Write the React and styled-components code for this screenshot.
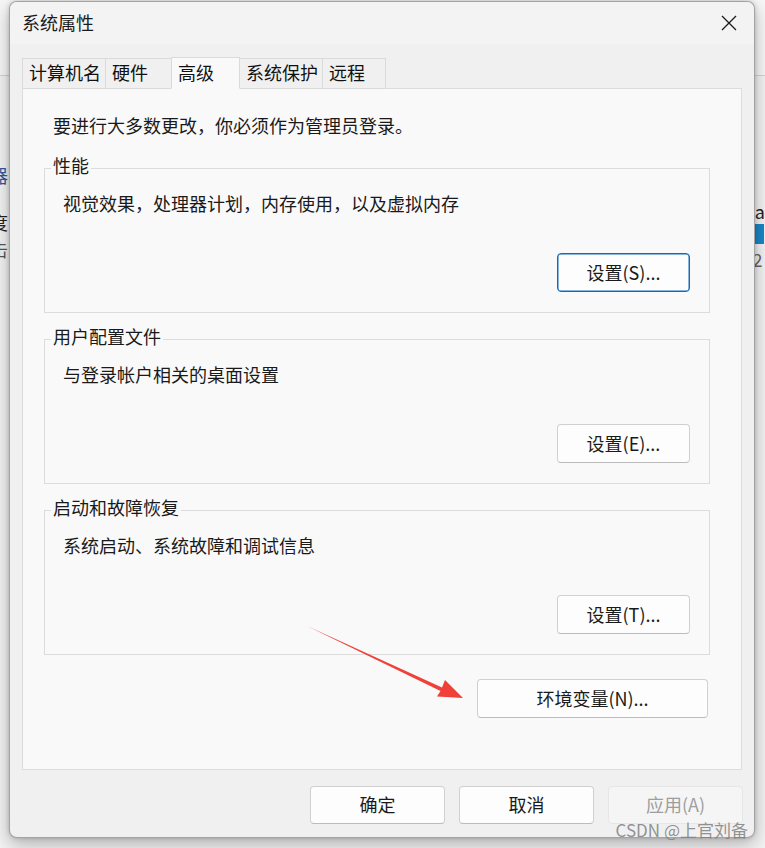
import React from "react";
import styled, { createGlobalStyle } from "styled-components";

const GlobalStyle = createGlobalStyle`
  html, body {
    margin: 0;
    padding: 0;
    background: #f3f3f3;
  }
  * {
    box-sizing: border-box;
  }
`;

const FONT = `"Noto Sans CJK SC", "Noto Sans", sans-serif`;

const Desktop = styled.div`
  position: relative;
  width: 765px;
  height: 848px;
  overflow: hidden;
  background: #f3f3f3;
  font-family: ${FONT};
  color: #1a1a1a;
`;

/* the application window behind the dialog */
const BackToolbar = styled.div`
  height: 76px;
  background: #f7f7f7;
  border-bottom: 1px solid #d4d4d4;
`;

const BackBody = styled.div`
  display: flex;
  justify-content: space-between;
`;

const BackColumn = styled.div`
  display: flex;
  flex-direction: column;
  margin-left: ${(p) => (p.$left ? "-10px" : "0")};
`;

const BackText = styled.div`
  margin-top: ${(p) => p.$top}px;
  font-size: 18px;
  line-height: 24px;
  white-space: nowrap;
  color: ${(p) => p.$color || "#222"};
`;

const BackBar = styled.div`
  margin-top: 1px;
  width: 22px;
  height: 20px;
  background: #1a86c8;
`;

/* dialog */
const Dialog = styled.div`
  position: absolute;
  left: 9px;
  top: 1px;
  width: 746px;
  height: 837px;
  display: flex;
  flex-direction: column;
  background: #f0f0f0;
  border: 1px solid rgba(0, 0, 0, 0.32);
  border-radius: 8px;
  overflow: hidden;
  box-shadow: 0 6px 18px rgba(0, 0, 0, 0.28), 0 0 4px rgba(0, 0, 0, 0.18);
`;

const TitleBar = styled.div`
  height: 42px;
  display: flex;
  align-items: center;
  justify-content: space-between;
  padding: 0 2px 0 12px;
  background: #f3f3f4;
`;

const Title = styled.div`
  font-size: 18px;
  line-height: 24px;
  padding-bottom: 3px;
  color: #1b1b1b;
`;

const CloseButton = styled.button`
  width: 46px;
  height: 42px;
  border: 0;
  padding: 0;
  background: transparent;
  display: flex;
  align-items: center;
  justify-content: center;
`;

const Body = styled.div`
  flex: 1;
  display: flex;
  flex-direction: column;
  padding: 13px 12px 0 12px;
`;

const TabRow = styled.div`
  display: flex;
  align-items: flex-end;
  height: 32px;
  margin-bottom: -1px;
  position: relative;
  z-index: 1;
`;

const Tab = styled.div`
  width: ${(p) => p.$width}px;
  height: ${(p) => (p.$active ? "32px" : "31px")};
  margin-left: -1px;
  padding: 0 0 3px 6px;
  display: flex;
  align-items: center;
  font-size: 18px;
  line-height: 24px;
  white-space: nowrap;
  color: #111;
  background: ${(p) => (p.$active ? "#f9f9f9" : "#f0f0f0")};
  border: 1px solid #dadada;
  border-bottom: ${(p) => (p.$active ? "1px solid #f9f9f9" : "1px solid #dadada")};
  position: relative;
  z-index: ${(p) => (p.$active ? 2 : 1)};

  &:first-child {
    margin-left: 0;
  }
`;

const Panel = styled.div`
  height: 682px;
  background: #f9f9f9;
  border: 1px solid #dcdcdc;
  padding: 24px 31px 0 21px;
  display: flex;
  flex-direction: column;
`;

const Intro = styled.div`
  margin-left: 9px;
  font-size: 18px;
  line-height: 24px;
`;

const Group = styled.div`
  position: relative;
  height: 145px;
  margin-top: ${(p) => p.$top}px;
  border: 1px solid #dcdcdc;
  padding: 22px 19px 20px 18px;
  display: flex;
  flex-direction: column;
  justify-content: space-between;
`;

const Legend = styled.div`
  position: absolute;
  left: 6px;
  top: -16px;
  padding: 0 2px;
  background: #f9f9f9;
  font-size: 18px;
  line-height: 24px;
  white-space: nowrap;
`;

const Description = styled.div`
  font-size: 18px;
  line-height: 24px;
`;

const Button = styled.button`
  width: ${(p) => p.$width || 133}px;
  height: ${(p) => p.$height || 39}px;
  align-self: flex-end;
  padding: 0 0 2px;
  font-family: ${FONT};
  font-size: 18px;
  line-height: 24px;
  color: ${(p) => (p.disabled ? "#9e9e9e" : "#1a1a1a")};
  background: ${(p) => (p.disabled ? "#f5f5f5" : "#fdfdfd")};
  border: 1px solid
    ${(p) => (p.$focus ? "#0f6cbd" : p.disabled ? "#e6e6e6" : "#d0d0d0")};
  border-bottom-color: ${(p) =>
    p.$focus ? "#0f6cbd" : p.disabled ? "#e6e6e6" : "#bcbcbc"};
  box-shadow: ${(p) => (p.$focus ? "inset 0 0 0 0.5px #0f6cbd" : "none")};
  border-radius: 4px;
`;

const EnvRow = styled.div`
  margin-top: 24px;
  display: flex;
  justify-content: flex-end;
  padding-right: 2px;
`;

const Footer = styled.div`
  display: flex;
  justify-content: flex-end;
  gap: 14px;
  padding-top: 16px;
  margin-right: -1px;
`;

const Overlay = styled.svg`
  position: absolute;
  left: 0;
  top: 0;
  pointer-events: none;
`;

const Watermark = styled.div`
  position: absolute;
  right: 17px;
  top: 819px;
  font-size: 17px;
  line-height: 22px;
  color: rgba(128, 128, 128, 0.85);
  white-space: nowrap;
`;

const groups = [
  { title: "性能", text: "视觉效果，处理器计划，内存使用，以及虚拟内存", button: "设置(S)...", focus: true, top: 31 },
  { title: "用户配置文件", text: "与登录帐户相关的桌面设置", button: "设置(E)...", top: 26 },
  { title: "启动和故障恢复", text: "系统启动、系统故障和调试信息", button: "设置(T)...", top: 26 },
];

const tabs = [
  { label: "计算机名", width: 84 },
  { label: "硬件", width: 67 },
  { label: "高级", width: 69, active: true },
  { label: "系统保护", width: 84 },
  { label: "远程", width: 64 },
];

const App = () => {
  return (
    <>
      <GlobalStyle />
      <Desktop>
        <BackToolbar />
        <BackBody>
          <BackColumn $left>
            <BackText $top={87} $color="#2c5aa0">器</BackText>
            <BackText $top={23}>度</BackText>
            <BackText $top={3} $color="#555">击</BackText>
          </BackColumn>
          <BackColumn>
            <BackText $top={123}>Da</BackText>
            <BackBar />
            <BackText $top={3} $color="#666">12</BackText>
          </BackColumn>
        </BackBody>

        <Dialog>
          <TitleBar>
            <Title>系统属性</Title>
            <CloseButton aria-label="关闭">
              <svg width="16" height="16" viewBox="0 0 16 16">
                <path d="M1 1 L15 15 M15 1 L1 15" stroke="#1a1a1a" strokeWidth="1.3" />
              </svg>
            </CloseButton>
          </TitleBar>
          <Body>
            <TabRow>
              {tabs.map((t) => (
                <Tab key={t.label} $active={t.active} $width={t.width}>
                  {t.label}
                </Tab>
              ))}
            </TabRow>
            <Panel>
              <Intro>要进行大多数更改，你必须作为管理员登录。</Intro>
              {groups.map((g) => (
                <Group key={g.title} $top={g.top}>
                  <Legend>{g.title}</Legend>
                  <Description>{g.text}</Description>
                  <Button $focus={g.focus}>{g.button}</Button>
                </Group>
              ))}
              <EnvRow>
                <Button $width={231}>环境变量(N)...</Button>
              </EnvRow>
            </Panel>
            <Footer>
              <Button $width={135} $height={38}>确定</Button>
              <Button $width={135} $height={38}>取消</Button>
              <Button $width={135} $height={38} disabled>
                应用(A)
              </Button>
            </Footer>
          </Body>
        </Dialog>

        <Overlay width="765" height="848" viewBox="0 0 765 848">
          <polygon
            points="307,626 442,687.5 445,680 463,698 437,696.5 440.5,691"
            fill="#f0403a"
          />
        </Overlay>
        <Watermark>CSDN @上官刘备</Watermark>
      </Desktop>
    </>
  );
};

export default App;
